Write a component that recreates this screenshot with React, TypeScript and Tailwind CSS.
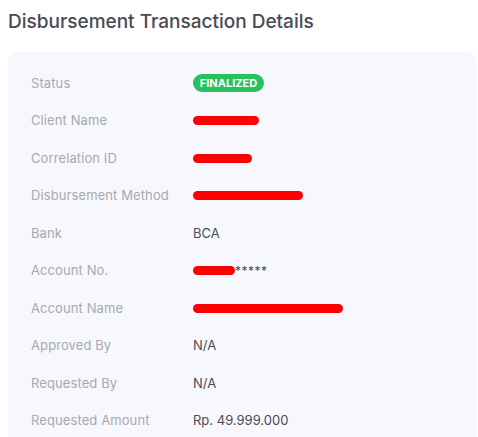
const rows: { label: string; value?: string; redact?: number; stars?: boolean; badge?: boolean }[] = [
  { label: "Status", badge: true },
  { label: "Client Name", redact: 66 },
  { label: "Correlation ID", redact: 59 },
  { label: "Disbursement Method", redact: 110 },
  { label: "Bank", value: "BCA" },
  { label: "Account No.", redact: 42, stars: true },
  { label: "Account Name", redact: 150 },
  { label: "Approved By", value: "N/A" },
  { label: "Requested By", value: "N/A" },
  { label: "Requested Amount", value: "Rp. 49.999.000" },
];

export default function App() {
  return (
    <div className="min-h-[437px] bg-white pl-2 font-['Inter','Noto_Sans',sans-serif]">
      <h1 className="pt-[8px] text-[19px] leading-[28px] font-medium text-[#4a4a55]">
        Disbursement Transaction Details
      </h1>
      <div className="mt-[16px] mr-[1px] rounded-[10px] bg-[#f7f8fd] px-[23px] pt-[12px] pb-4">
        {rows.map((row) => (
          <div key={row.label} className="flex h-[37.5px] items-center pt-[1px] text-[13px]">
            <span className="w-[162px] shrink-0 tracking-[0.1px] text-[#a8a8ae]">{row.label}</span>
            {row.badge && (
              <span className="flex h-[18px] w-[71px] items-center justify-center rounded-full bg-[#28c15f] text-[11px] font-bold text-white">
                FINALIZED
              </span>
            )}
            {row.redact && (
              <span className="flex items-center">
                <span className="h-[9px] rounded-full bg-[#ff0000]" style={{ width: row.redact }} />
                {row.stars && <span className="text-[12px] text-[#4b4b55] tracking-[0.5px]">*****</span>}
              </span>
            )}
            {row.value && <span className="text-[#4b4b55]">{row.value}</span>}
          </div>
        ))}
      </div>
    </div>
  );
}
